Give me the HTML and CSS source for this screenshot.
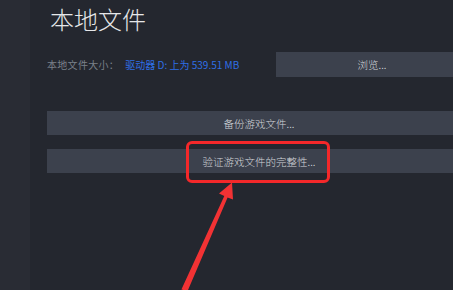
FILE: index.html
```html
<!DOCTYPE html>
<html lang="zh">
<head>
<meta charset="utf-8">
<title>本地文件</title>
<link rel="stylesheet" href="styles.css">
</head>
<body>
<div class="page">
  <aside class="sidebar"></aside>
  <main class="main">
    <h1 class="title">本地文件</h1>
    <div class="size-row">
      <div class="size-info">
        <span class="size-label">本地文件大小：</span>
        <span class="size-link">驱动器 D: 上为 539.51 MB</span>
      </div>
      <button class="btn btn-browse">浏览...</button>
    </div>
    <div class="actions">
      <button class="btn btn-wide">备份游戏文件...</button>
      <button class="btn btn-wide">验证游戏文件的完整性...</button>
    </div>
  </main>
</div>
<svg class="annotation" width="453" height="290" viewBox="0 0 453 290">
  <rect x="187.5" y="142.5" width="141" height="39" rx="4.5" ry="4.5" fill="none" stroke="#f4282a" stroke-width="3"/>
  <polygon fill="#f23234" points="232,182.5 233,199.5 227.6,197.4 187.6,291 181.4,289.5 224.3,195.9 219,193.5"/>
</svg>
</body>
</html>
```

FILE: styles.css
```css
html, body {
  margin: 0;
  padding: 0;
  background: #24272f;
  overflow: hidden;
  width: 453px;
  height: 290px;
}

body {
  position: relative;
  font-family: "Noto Sans CJK SC", "Noto Sans", "Liberation Sans", sans-serif;
}

.page {
  display: flex;
  width: 453px;
  height: 290px;
  overflow: hidden;
}

.sidebar {
  width: 30px;
  flex: 0 0 30px;
  background: #292c34;
}

.main {
  flex: 1;
  min-width: 0;
  padding: 0 0 0 17px;
  overflow: hidden;
}

.title {
  margin: 0;
  padding: 1px 0 0 3px;
  font-size: 24px;
  line-height: 35px;
  font-weight: 300;
  color: #e6e7e9;
}

.size-row {
  display: flex;
  align-items: center;
  height: 25px;
  margin-top: 16px;
}

.size-info {
  flex: 0 0 229px;
  font-size: 10px;
  line-height: 15px;
  white-space: nowrap;
}

.size-label {
  color: #7a808a;
  letter-spacing: 0.3px;
}

.size-link {
  color: #2f6fe6;
  margin-left: 4px;
}

.btn {
  display: block;
  flex: 0 0 auto;
  border: 0;
  margin: 0;
  padding: 0;
  background: #3c414d;
  color: #d2d5da;
  font-family: "Noto Sans CJK SC", "Noto Sans", "Liberation Sans", sans-serif;
  font-size: 10.5px;
  font-weight: 300;
  text-align: center;
}

.btn-browse {
  width: 192px;
  height: 25px;
}

.actions {
  display: flex;
  flex-direction: column;
  gap: 14px;
  margin-top: 34px;
}

.btn-wide {
  width: 424px;
  height: 24px;
}

.annotation {
  position: absolute;
  left: 0;
  top: 0;
}
```
